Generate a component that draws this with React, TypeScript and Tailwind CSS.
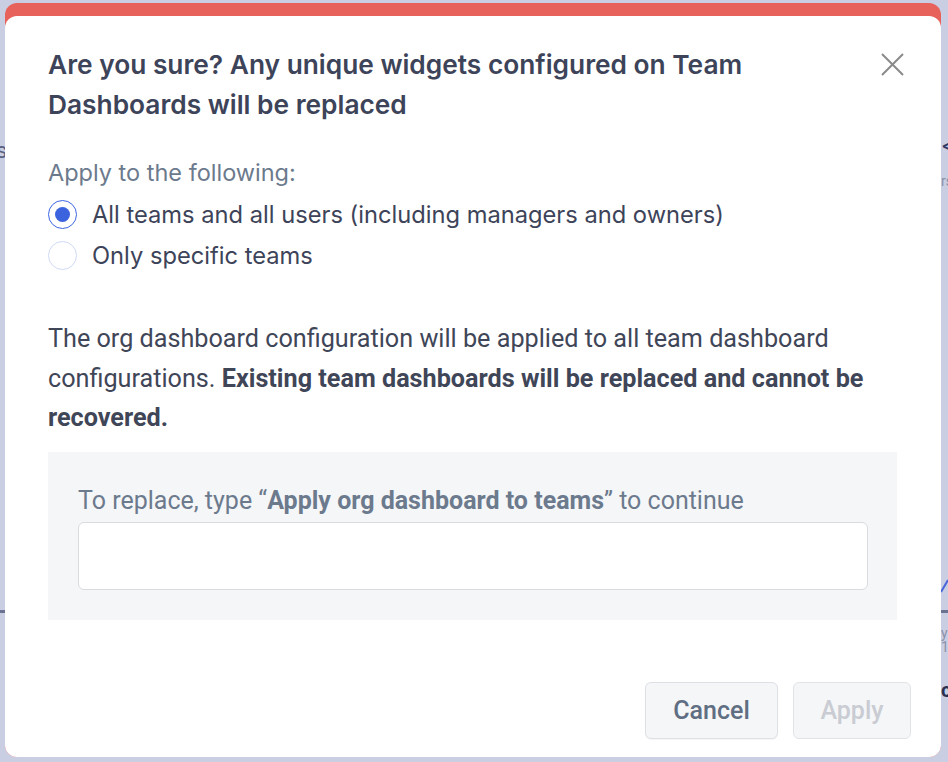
import React from "react";

export default function App() {
  const inter = { fontFamily: "Inter, 'Noto Sans', sans-serif" };
  const roboto = { fontFamily: "Roboto, 'Liberation Sans', sans-serif" };
  return (
    <div className="relative w-[948px] h-[762px] overflow-hidden bg-[#c9cee3] pt-[3px] pl-[5px] pr-[7px] pb-[5px]">
      {/* faint background fragments behind the overlay */}
      <div className="absolute left-[-4px] top-[134px] text-[22px] text-[#5a6182]" style={roboto}>s</div>
      <div className="absolute left-0 top-[610px] w-[5px] h-[3px] bg-[#6c7392]" />
      <div className="absolute left-[942px] top-[134px] text-[24px] leading-none text-[#2f3866]" style={roboto}>&lt;</div>
      <div className="absolute left-[941px] top-[174px] text-[14px] leading-none text-[#8b91a8]" style={roboto}>rs</div>
      <div className="absolute left-[941px] top-[610px] w-[7px] h-[3px] bg-[#6c7392]" />
      <div className="absolute left-[941px] top-[626px] text-[14px] leading-none text-[#8b91a8]" style={roboto}>y 1</div>
      <div className="absolute left-[941px] top-[680px] text-[20px] leading-none font-bold text-[#2b3050]" style={roboto}>cl</div>
      <svg className="absolute left-[941px] top-[570px]" width="7" height="24" viewBox="0 0 7 24">
        <path d="M0 22 L7 10" stroke="#4a66d8" strokeWidth="2" fill="none" />
      </svg>

      <div className="relative h-full rounded-[12px] bg-[#e6625b] flex flex-col">
        <div className="relative mt-[13px] flex-1 rounded-[12px] bg-white flex flex-col">
          <button className="absolute right-[36px] top-[36px] text-[#8a8a8a]" aria-label="Close">
            <svg width="25" height="25" viewBox="0 0 25 25" fill="none" stroke="currentColor" strokeWidth="2">
              <path d="M2 2 L23 23 M23 2 L2 23" />
            </svg>
          </button>

          <div className="pl-[43px] pr-[44px] pt-[29px]">
            <h2 className="w-[790px] text-[26.3px] leading-[40px] font-semibold text-[#3d4459]" style={inter}>
              Are you sure? Any unique widgets configured on Team Dashboards will be replaced
            </h2>

            <div className="mt-[34px] text-[23.5px] leading-[28px] text-[#6c7a8d]" style={inter}>
              Apply to the following:
            </div>

            <div className="mt-[7px] flex flex-col" style={inter}>
              <label className="flex items-center h-[41px] gap-[15px]">
                <span className="w-[29px] h-[29px] rounded-full border-[1.5px] border-[#3b66e3] bg-white flex items-center justify-center">
                  <span className="w-[15px] h-[15px] rounded-full bg-[#3b63de]" />
                </span>
                <span className="text-[23.7px] text-[#3d4459]">
                  All teams and all users (including managers and owners)
                </span>
              </label>
              <label className="flex items-center h-[41px] gap-[15px]">
                <span className="w-[29px] h-[29px] rounded-full border-[1.5px] border-[#cfdaf3] bg-white" />
                <span className="text-[23.7px] text-[#3d4459]">Only specific teams</span>
              </label>
            </div>

            <p className="mt-[43px] text-[25.2px] leading-[39.5px] text-[#3f4658]" style={roboto}>
              The org dashboard configuration will be applied to all team dashboard configurations.{" "}
              <span className="font-bold">Existing team dashboards will be replaced and cannot be recovered.</span>
            </p>

            <div className="mt-[14px] bg-[#f5f6f8] pl-[30px] pr-[29px] pt-[35px] pb-[30px]">
              <div className="text-[25px] leading-[28px] text-[#6c7a8d]" style={roboto}>
                To replace, type “<span className="font-bold">Apply org dashboard to teams</span>” to continue
              </div>
              <input
                type="text"
                className="mt-[7px] block w-full h-[68px] rounded-[6px] border border-[#d9dbe0] bg-white outline-none px-3 text-[20px]"
                style={roboto}
              />
            </div>
          </div>

          <div className="mt-auto flex justify-end gap-[15px] pr-[30px] pb-[18px]" style={roboto}>
            <button className="w-[133px] h-[57px] rounded-[6px] border border-[#dde0e5] bg-[#f5f6f8] text-[25px] font-medium text-[#5f6e82] shadow-[0_1px_1px_rgba(0,0,0,0.04)]">
              Cancel
            </button>
            <button
              disabled
              className="w-[118px] h-[57px] rounded-[6px] border border-[#e1e3e7] bg-[#f5f6f8] text-[25px] font-medium text-[#c9ccd2]"
            >
              Apply
            </button>
          </div>
        </div>
      </div>
    </div>
  );
}
